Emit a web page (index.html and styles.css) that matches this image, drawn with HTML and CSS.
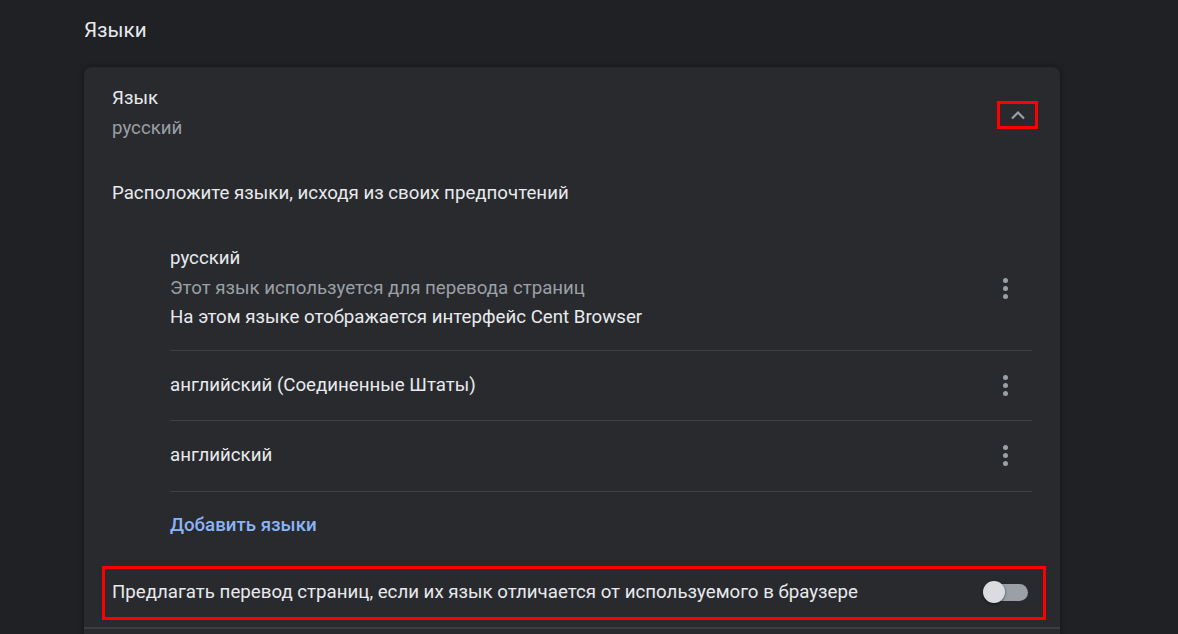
FILE: index.html
```html
<!DOCTYPE html>
<html lang="ru">
  <head>
    <meta charset="UTF-8" />
    <title>Языки</title>
    <link rel="stylesheet" href="styles.css">
  </head>
  <body>
    <div class="page">
      <h2 class="section-title">Языки</h2>
      <div class="card">
        <div class="card-header">
          <div>
            <div class="primary">Язык</div>
            <div class="secondary">русский</div>
          </div>
          <button class="expand-btn" aria-label="Свернуть">
            <svg width="16" height="10" viewBox="0 0 16 10">
              <path d="M2 8.5 L8 2.5 L14 8.5" fill="none" stroke="#9aa0a6" stroke-width="2.2"/>
            </svg>
          </button>
        </div>

        <div class="intro">Расположите языки, исходя из своих предпочтений</div>

        <div class="lang-list">
          <div class="lang-item first">
            <div>
              <div class="primary">русский</div>
              <div class="secondary">Этот язык используется для перевода страниц</div>
              <div class="primary">На этом языке отображается интерфейс Cent Browser</div>
            </div>
            <span class="kebab"><i></i><i></i><i></i></span>
          </div>
          <div class="lang-item">
            <div class="primary">английский (Соединенные Штаты)</div>
            <span class="kebab"><i></i><i></i><i></i></span>
          </div>
          <div class="lang-item">
            <div class="primary">английский</div>
            <span class="kebab"><i></i><i></i><i></i></span>
          </div>
          <div class="add-row">
            <a class="add-link" href="#">Добавить языки</a>
          </div>
        </div>

        <div class="toggle-row">
          <div class="primary">Предлагать перевод страниц, если их язык отличается от используемого в браузере</div>
          <span class="toggle"><span class="knob"></span></span>
        </div>
        <div class="card-sep"></div>
      </div>
    </div>
  </body>
</html>
```

FILE: styles.css
```css
body {
  margin: 0;
  background-color: #202124;
  font-family: Roboto, "Noto Sans", sans-serif;
  font-size: 18.7px;
  color: #e8eaed;
  height: 634px;
  overflow: hidden;
}

.page {
  padding-left: 84px;
  width: 976px;
}

.section-title {
  margin: 0;
  height: 67px;
  padding-top: 15px;
  box-sizing: border-box;
  font-size: 20.6px;
  font-weight: 400;
  line-height: 30px;
}

.card {
  background-color: #292a2d;
  border-radius: 8px 8px 0 0;
  box-shadow: 0 0 6px rgba(0, 0, 0, 0.35);
  padding-bottom: 10px;
}

.primary {
  line-height: 29.5px;
  color: #e8eaed;
}

.secondary {
  line-height: 29.5px;
  color: #9aa0a6;
}

.card-header {
  display: flex;
  justify-content: space-between;
  align-items: center;
  padding: 16px 22px 0 28px;
  height: 60px;
}

.card-header .primary,
.card-header .secondary {
  line-height: 30px;
}

.expand-btn {
  width: 41px;
  height: 28px;
  border: 3px solid #ff0000;
  background: transparent;
  padding: 0;
  margin-top: 4px;
  display: flex;
  align-items: center;
  justify-content: center;
}

.intro {
  padding: 35px 28px 0;
  line-height: 30px;
}

.lang-list {
  padding: 20px 28px 0 86px;
}

.lang-item {
  display: flex;
  justify-content: space-between;
  align-items: center;
  min-height: 69.5px;
  border-top: 1px solid #3f4042;
}

.lang-item.first {
  border-top: none;
  padding: 16px 0 17px;
  min-height: 0;
}

.lang-item:nth-child(3) {
  border-bottom: 1px solid #3f4042;
}

.kebab {
  display: flex;
  flex-direction: column;
  gap: 3px;
  width: 5px;
  margin-right: 24px;
}

.kebab i {
  display: block;
  width: 5px;
  height: 5px;
  border-radius: 50%;
  background-color: #9aa0a6;
}

.add-row {
  height: 66px;
  display: flex;
  align-items: center;
}

.add-link {
  color: #8ab4f8;
  font-weight: 500;
  text-decoration: none;
  line-height: 30px;
}

.toggle-row {
  display: flex;
  justify-content: space-between;
  align-items: center;
  margin: 8px 14px 0 18px;
  height: 54px;
  box-sizing: border-box;
  border: 3px solid #ff0000;
  padding: 0 15px 0 7px;
}

.toggle {
  position: relative;
  display: block;
  width: 42px;
  height: 17px;
  border-radius: 9px;
  background-color: #9aa0a6;
}

.toggle .knob {
  position: absolute;
  left: -3px;
  top: -3px;
  width: 22px;
  height: 22px;
  border-radius: 50%;
  background-color: #dadce0;
  box-shadow: 0 1px 3px rgba(0, 0, 0, 0.5);
}

.card-sep {
  margin-top: 7px;
  height: 2px;
  background-color: #3c3d40;
}
```
